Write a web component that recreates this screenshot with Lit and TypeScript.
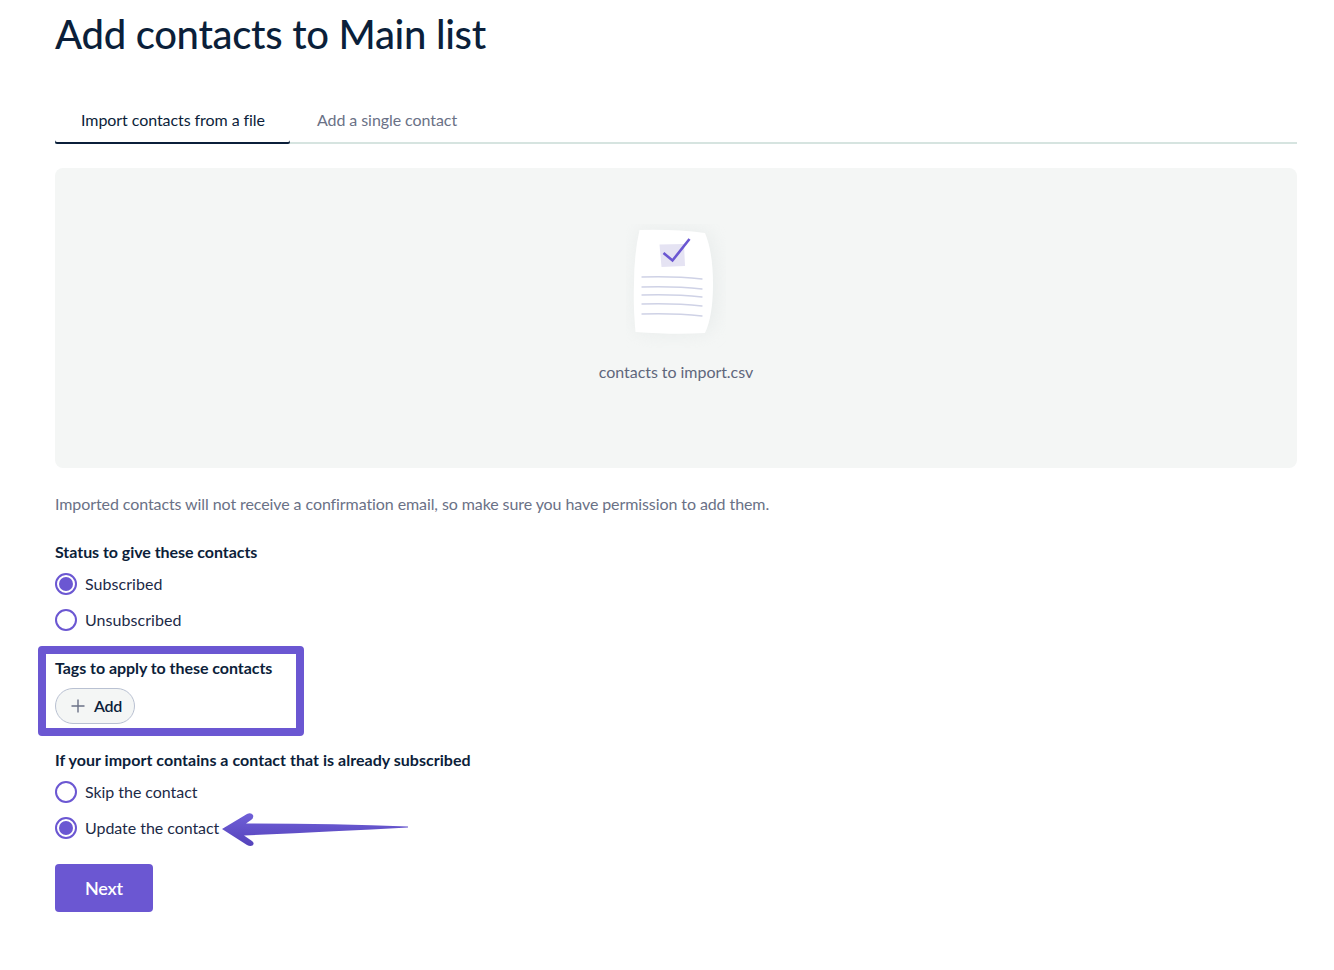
import { LitElement, html, css } from "lit";
import { customElement } from "lit/decorators.js";

@customElement("app-root")
export class AppRoot extends LitElement {
  static styles = css`
    :host { display: block; height: 970px; overflow: hidden; background: #fff; font-family: Lato, sans-serif; color: #0c1e3a; box-sizing: border-box; padding: 0 37px 0 55px; letter-spacing: -0.05px; }
    h1 { margin: 0; height: 70px; font-size: 40px; line-height: 68px; font-weight: 500; color: #0b1f3a; letter-spacing: -0.3px; }
    .tabs { display: flex; margin-top: 26px; height: 46px; border-bottom: 2px solid #d6e4e0; }
    .tab { padding: 0 26px 0 27px; font-size: 16px; line-height: 48px; height: 46px; color: #6a7186; letter-spacing: -0.07px; }
    .tab.on { padding: 0 25px 0 26px; color: #0c1e3a; box-shadow: 0 2px 0 #0b1f3a; border-radius: 0 0 2px 2px; }
    .drop { margin-top: 24px; height: 300px; border-radius: 8px; background: #f4f6f5; display: flex; flex-direction: column; align-items: center; padding-top: 56px; box-sizing: border-box; }
    .doc { width: 100px; height: 124px; display: block; }
    .fname { margin-top: 12px; font-size: 16px; line-height: 24px; color: #5f677c; }
    .note { margin: 24px 0 0; font-size: 16px; line-height: 24px; color: #6a7186; letter-spacing: -0.09px; }
    .label { font-size: 16px; line-height: 24px; font-weight: 700; color: #0c1e3a; letter-spacing: -0.05px; }
    .group { margin-top: 24px; letter-spacing: 0.05px; }
    .group .label { margin-bottom: 2px; }
    .radio { display: flex; align-items: center; gap: 8px; height: 36px; font-size: 16px; color: #1c2a47; position: relative; }
    .radio span.t { margin-bottom: 2px; }
    .dot { width: 22px; height: 22px; border-radius: 50%; border: 2px solid #6b57d2; box-sizing: border-box; background: #fff; flex: none; display: flex; align-items: center; justify-content: center; }
    .dot.on::after { content: ""; width: 14px; height: 14px; border-radius: 50%; background: #6b57d2; }
    .hl { margin: 8px 0 0 -17px; width: 266px; height: 90px; box-sizing: border-box; border: 8px solid #6b57d2; border-radius: 4px; padding: 2px 9px 0; }
    .hl .label { margin-bottom: 8px; }
    .add { display: flex; align-items: center; gap: 9px; width: 80px; height: 36px; box-sizing: border-box; padding: 0 0 0 15px; border: 1px solid #b9c1d2; border-radius: 18px; background: #f4f6f5; font-size: 16px; font-weight: 600; color: #0c1e3a; font-family: inherit; letter-spacing: -0.3px; }
    .add svg { width: 14px; height: 14px; flex: none; }
    .add span { margin-bottom: 2px; }
    .group.last { margin-top: 12px; letter-spacing: -0.05px; }
    .group.last .label { letter-spacing: 0.03px; }
    .arrow { position: absolute; left: 167px; top: 0; width: 186px; height: 37px; }
    .next { display: block; margin-top: 18px; width: 98px; height: 48px; border: 0; border-radius: 4px; background: #6b57d2; color: #fff; font-family: inherit; font-size: 18px; font-weight: 600; padding: 0; letter-spacing: -0.2px; }
  `;

  render() {
    return html`
      <h1>Add contacts to Main list</h1>
      <div class="tabs">
        <div class="tab on">Import contacts from a file</div>
        <div class="tab">Add a single contact</div>
      </div>
      <div class="drop">
        <svg class="doc" viewBox="1 0 100 124" aria-hidden="true">
          <defs>
            <filter id="s" x="-40%" y="-40%" width="180%" height="180%"><feGaussianBlur stdDeviation="9"/></filter>
          </defs>
          <path d="M14 6 Q50 4 84 8 Q92 30 92 62 Q92 95 84 108 Q50 112 12 108 Q7 70 12 34 Z" fill="#dfe4e4" opacity=".55" filter="url(#s)"/>
          <path d="M14.500 6 Q50 5 80 9 Q88 28 88 60 Q88 92 80 109 Q50 111 10.500 108 Q8 80 9 60 Q9 30 14.500 6 Z" fill="#fff"/>
          <path d="M34.500 20.500 L59 20 L60 42 L36.500 43 Z" fill="#e5e3f3"/>
          <path d="M38.500 29 L47.500 36.500 L64.500 15" fill="none" stroke="#6b57d2" stroke-width="2.600"/>
          <g fill="none" stroke="#cfd2e6" stroke-width="1.300" stroke-linecap="round">
            <path d="M17 53 Q50 52 77 55"/>
            <path d="M17 63 Q50 62 77 65"/>
            <path d="M17 71 Q50 70 77 73"/>
            <path d="M17 80 Q50 79 77 82"/>
            <path d="M17 90 Q50 89 77 92"/>
          </g>
        </svg>
        <div class="fname">contacts to import.csv</div>
      </div>
      <p class="note">Imported contacts will not receive a confirmation email, so make sure you have permission to add them.</p>
      <div class="group">
        <div class="label">Status to give these contacts</div>
        <div class="radio"><span class="dot on"></span><span class="t">Subscribed</span></div>
        <div class="radio"><span class="dot"></span><span class="t">Unsubscribed</span></div>
      </div>
      <div class="hl">
        <div class="label">Tags to apply to these contacts</div>
        <button class="add">
          <svg viewBox="0 0 14 14"><path d="M7 .5v13M.5 7h13" stroke="#6a7186" stroke-width="1.400" fill="none"/></svg>
          <span>Add</span>
        </button>
      </div>
      <div class="group last">
        <div class="label">If your import contains a contact that is already subscribed</div>
        <div class="radio"><span class="dot"></span><span class="t">Skip the contact</span></div>
        <div class="radio"><span class="dot on"></span><span class="t">Update the contact</span>
          <svg class="arrow" viewBox="0 0 186 37" aria-hidden="true">
            <path d="M0 19 L25 4 Q29 2 31 5 Q32 8 29 10 L24 13.500 Q110 13.500 186 16.500 L186 17.500 Q110 21.500 22 25.500 L30 31 Q33 33.500 30.500 35.500 Q28 36.500 25 35 Z" fill="url(#g2)"/>
            <defs><linearGradient id="g2" x1="0" x2="0" y1="0" y2="1"><stop offset="0" stop-color="#7060d8"/><stop offset="1" stop-color="#5543bb"/></linearGradient></defs>
          </svg>
        </div>
      </div>
      <button class="next">Next</button>
    `;
  }
}
